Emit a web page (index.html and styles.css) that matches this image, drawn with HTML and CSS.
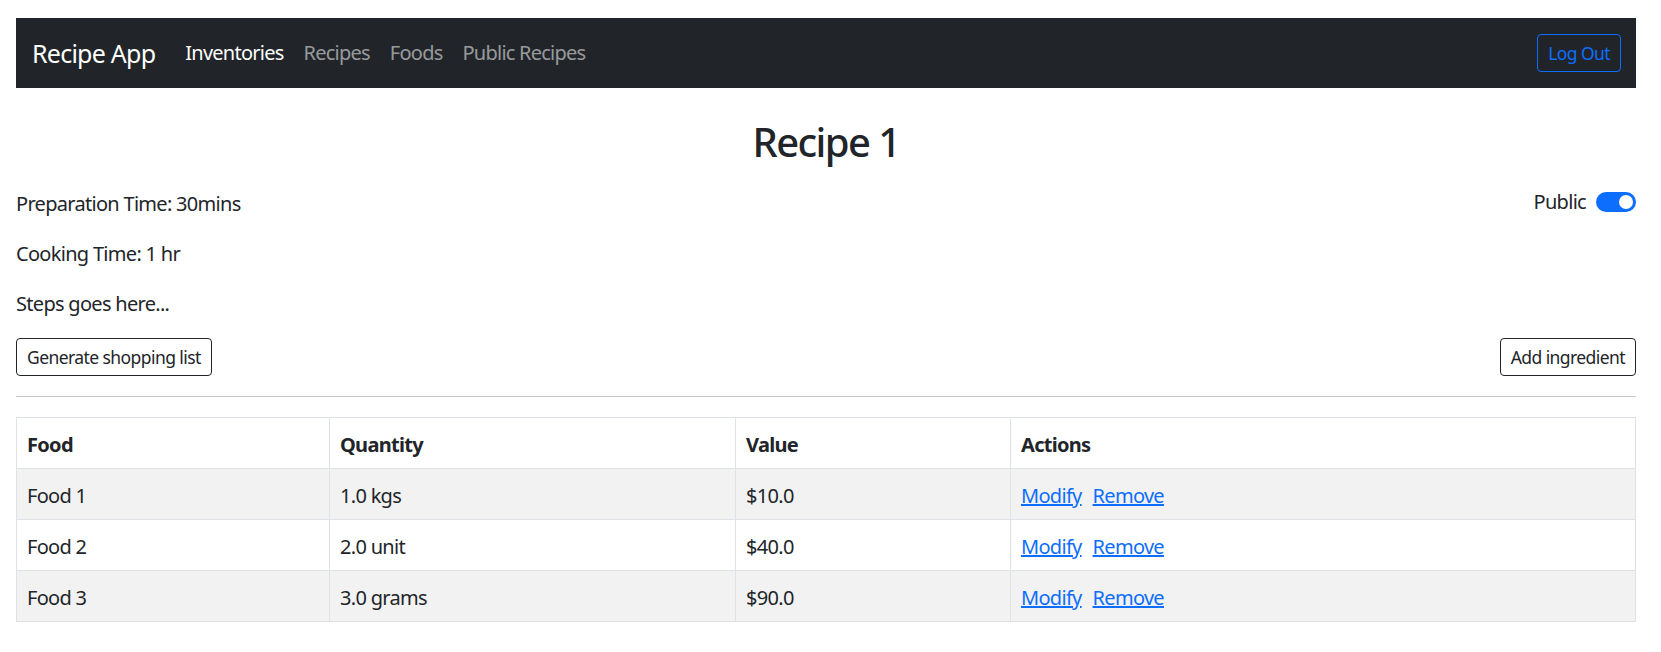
FILE: index.html
```html
<!DOCTYPE html>
<html lang="en">
<head>
<meta charset="utf-8">
<title>Recipe App</title>
<link rel="stylesheet" href="styles.css">
</head>
<body>
<div class="page">
  <nav class="navbar">
    <a class="brand" href="#">Recipe App</a>
    <ul class="nav">
      <li><a class="nav-link active" href="#">Inventories</a></li>
      <li><a class="nav-link" href="#">Recipes</a></li>
      <li><a class="nav-link" href="#">Foods</a></li>
      <li><a class="nav-link" href="#">Public Recipes</a></li>
    </ul>
    <button class="btn btn-logout" type="button">Log Out</button>
  </nav>

  <main class="content">
    <h2 class="title">Recipe 1</h2>
    <div class="meta-row">
      <p class="meta">Preparation Time: 30mins</p>
      <label class="switch">
        <span class="switch-label">Public</span>
        <span class="switch-track"><span class="switch-knob"></span></span>
      </label>
    </div>
    <p class="meta">Cooking Time: 1 hr</p>
    <p class="meta">Steps goes here...</p>

    <div class="button-row">
      <button class="btn btn-outline" type="button">Generate shopping list</button>
      <button class="btn btn-outline" type="button">Add ingredient</button>
    </div>

    <hr class="divider">

    <table class="table">
      <colgroup>
        <col class="col-food">
        <col class="col-qty">
        <col class="col-value">
        <col class="col-actions">
      </colgroup>
      <thead>
        <tr><th>Food</th><th>Quantity</th><th>Value</th><th>Actions</th></tr>
      </thead>
      <tbody>
        <tr>
          <td>Food 1</td><td>1.0 kgs</td><td>$10.0</td>
          <td><div class="links"><a href="#">Modify</a><a href="#">Remove</a></div></td>
        </tr>
        <tr>
          <td>Food 2</td><td>2.0 unit</td><td>$40.0</td>
          <td><div class="links"><a href="#">Modify</a><a href="#">Remove</a></div></td>
        </tr>
        <tr>
          <td>Food 3</td><td>3.0 grams</td><td>$90.0</td>
          <td><div class="links"><a href="#">Modify</a><a href="#">Remove</a></div></td>
        </tr>
      </tbody>
    </table>
  </main>
</div>
</body>
</html>
```

FILE: styles.css
```css
* { box-sizing: border-box; }

body {
  margin: 0;
  font-family: "Noto Sans", "Open Sans", sans-serif;
  font-size: 20px;
  line-height: 30px;
  letter-spacing: -0.035em;
  color: #212529;
  background: #fff;
}

.page {
  padding: 18px 25px 0 16px;
}

/* Navbar */
.navbar {
  display: flex;
  align-items: center;
  height: 70px;
  padding: 0 15px 0 16px;
  background: #212529;
}

.brand {
  font-size: 25px;
  line-height: 37px;
  letter-spacing: -0.03em;
  color: #fff;
  text-decoration: none;
  margin-right: 20px;
}

.nav {
  display: flex;
  flex: 1;
  list-style: none;
  margin: 0;
  padding: 0;
}

.nav-link {
  display: block;
  padding: 5px 10px;
  font-size: 20px;
  line-height: 30px;
  letter-spacing: -0.038em;
  color: rgba(255, 255, 255, 0.55);
  text-decoration: none;
}

.nav-link.active {
  color: #fff;
}

.btn {
  font-family: inherit;
  letter-spacing: -0.033em;
  background: transparent;
  cursor: pointer;
  border-radius: 4px;
  font-size: 17.5px;
  line-height: 26px;
  padding: 5px 10px;
}

.btn-logout {
  color: #0d6efd;
  border: 1px solid #0d6efd;
}

.btn-outline {
  color: #212529;
  border: 1px solid #212529;
}

/* Content */
.title {
  margin: 30px 0 23px;
  text-align: center;
  font-size: 40px;
  line-height: 48px;
  font-weight: 500;
  letter-spacing: -0.04em;
}

.meta {
  margin: 0 0 20px;
}

.meta-row {
  display: flex;
  justify-content: space-between;
  align-items: flex-start;
}

.switch {
  display: flex;
  align-items: center;
  height: 30px;
  gap: 10px;
  margin-top: -2px;
}

.switch-track {
  display: flex;
  align-items: center;
  justify-content: flex-end;
  width: 40px;
  height: 20px;
  padding: 0 3px;
  border-radius: 10px;
  background: #0d6efd;
}

.switch-knob {
  width: 14px;
  height: 14px;
  border-radius: 50%;
  background: #fff;
}

.button-row {
  display: flex;
  justify-content: space-between;
  margin-top: -1px;
}

.divider {
  margin: 20px 0;
  border: 0;
  border-top: 1px solid #212529;
  opacity: 0.25;
}

/* Table */
.table {
  width: 100%;
  border-collapse: collapse;
  table-layout: fixed;
  border: 1px solid #dee2e6;
}

.col-food { width: 313px; }
.col-qty { width: 406px; }
.col-value { width: 275px; }

.table th,
.table td {
  padding: 12px 10px 8px;
  border: 1px solid #dee2e6;
  text-align: left;
  vertical-align: top;
}

.table th {
  font-weight: 700;
}

.table tbody tr:nth-child(odd) td {
  background: #f2f2f2;
}

.links {
  display: flex;
  gap: 11px;
}

.links a {
  color: #0d6efd;
  text-decoration: underline;
}
```
